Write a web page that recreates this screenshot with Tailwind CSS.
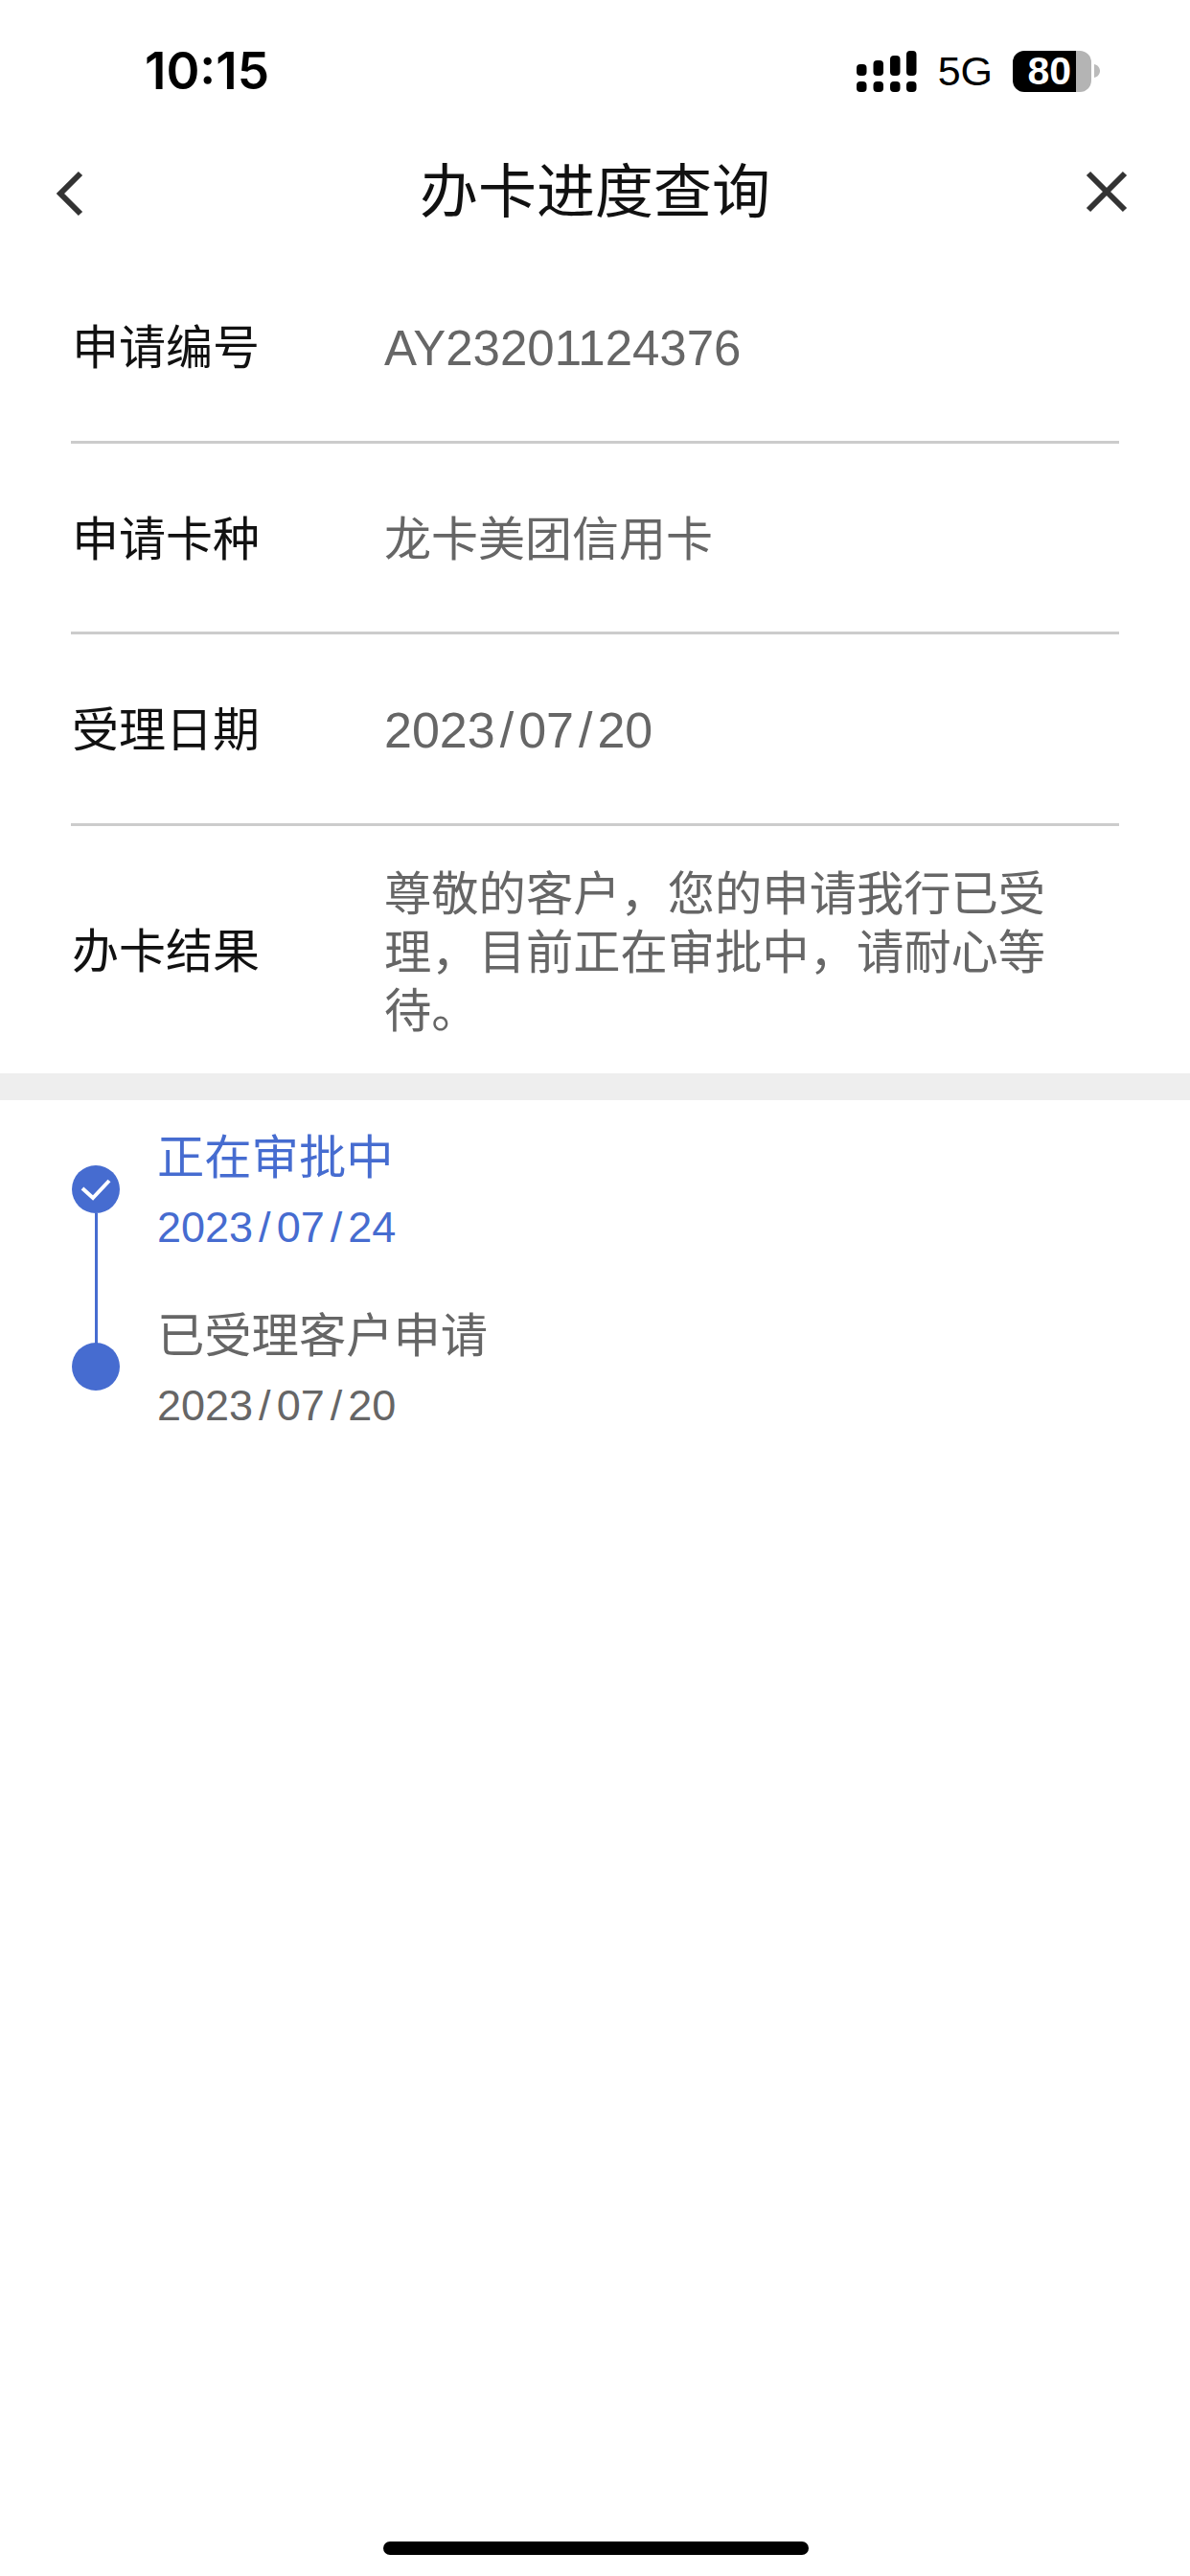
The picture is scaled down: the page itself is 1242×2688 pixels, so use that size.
<!DOCTYPE html>
<html lang="zh-CN">
<head>
    <meta charset="UTF-8"/>
    <meta name="viewport" content="width=device-width, initial-scale=1.0"/>
    <title>办卡进度查询</title>
    <script src="https://cdn.jsdelivr.net/npm/@tailwindcss/browser@4"></script>
</head>
<body class="bg-white font-['Liberation_Sans','Noto_Sans_CJK_SC',sans-serif]">
<div class="relative h-[2688px] w-[1242px] overflow-hidden bg-white">

    <!-- status bar -->
    <div class="flex h-[140px] items-center justify-between pl-[151px] pr-[94px] pt-[8px]">
        <span class="font-['Inter',sans-serif] text-[53px] font-semibold leading-none text-black">10:15</span>
        <div class="flex items-center">
            <svg width="63" height="43" viewBox="0 0 63 43" fill="#000">
                <rect x="0" y="14" width="10.500" height="12" rx="4"/>
                <rect x="17.500" y="10" width="10.500" height="16" rx="4"/>
                <rect x="35" y="5" width="10.500" height="21" rx="4"/>
                <rect x="52" y="0" width="10.500" height="26" rx="4"/>
                <rect x="0" y="32" width="10.500" height="11" rx="4"/>
                <rect x="17.500" y="32" width="10.500" height="11" rx="4"/>
                <rect x="35" y="32" width="10.500" height="11" rx="4"/>
                <rect x="52" y="32" width="10.500" height="11" rx="4"/>
            </svg>
            <span class="ml-[22px] text-[43px] leading-none text-black">5G</span>
            <div class="ml-[21px] flex h-[43px] w-[66px] items-center justify-end rounded-l-[12px] bg-black pr-[5px]">
                <span class="text-[41px] font-bold leading-none text-white">80</span>
            </div>
            <div class="h-[43px] w-[16px] rounded-r-[12px] bg-[#b4b4b4]"></div>
            <svg class="ml-[3px]" width="6" height="14" viewBox="0 0 6 14" fill="#bbb"><path d="M0 0C4 1 6 4 6 7S4 13 0 14Z"/></svg>
        </div>
    </div>

    <!-- nav -->
    <div class="relative flex h-[120px] items-center justify-center pt-[2px]">
        <svg class="absolute left-[58px] top-[38px]" width="30" height="48" viewBox="0 0 30 48" fill="none" stroke="#333" stroke-width="6">
            <path d="M26 3L5 24L26 45"/>
        </svg>
        <h1 class="text-[61px] font-normal leading-none text-[#111]">办卡进度查询</h1>
        <svg class="absolute left-[1133px] top-[38px]" width="44" height="44" viewBox="0 0 44 44" fill="none" stroke="#333" stroke-width="6">
            <path d="M3 3L41 41M41 3L3 41"/>
        </svg>
    </div>

    <!-- info rows -->
    <div class="px-[74px]">
        <div class="flex h-[203px] items-center border-b-[3px] border-[#cccccc] pt-[6px]">
            <span class="w-[327px] pl-[1px] text-[49px] leading-none text-[#111]">申请编号</span>
            <span class="text-[51px] leading-none text-[#666]">AY23201124376</span>
        </div>
        <div class="flex h-[199px] items-center border-b-[3px] border-[#cccccc] pt-[4px]">
            <span class="w-[327px] pl-[1px] text-[49px] leading-none text-[#111]">申请卡种</span>
            <span class="text-[49px] leading-none text-[#666]">龙卡美团信用卡</span>
        </div>
        <div class="flex h-[200px] items-center border-b-[3px] border-[#cccccc] pt-[3px]">
            <span class="w-[327px] pl-[1px] text-[49px] leading-none text-[#111]">受理日期</span>
            <span class="text-[52px] leading-none text-[#666]">2023<span class="mx-[5px]">/</span>07<span class="mx-[5px]">/</span>20</span>
        </div>
        <div class="flex h-[258px] items-center pt-[4px]">
            <span class="w-[327px] shrink-0 pl-[1px] text-[49px] leading-none text-[#111]">办卡结果</span>
            <p class="w-[700px] text-[49.300px] leading-[61px] text-[#666]">尊敬的客户，您的申请我行已受理，目前正在审批中，请耐心等待。</p>
        </div>
    </div>

    <div class="h-[28px] bg-[#eeeeee]"></div>

    <!-- timeline -->
    <div class="relative px-[75px] pt-[26px]">
        <div class="absolute left-[99px] top-[118px] h-[136px] w-[3px] bg-[#466cd0]"></div>

        <div class="flex h-[186px]">
            <div class="relative mt-[42px] flex h-[50px] w-[50px] items-center justify-center rounded-full bg-[#466cd0]">
                <svg width="32" height="24" viewBox="0 0 32 24" fill="none" stroke="#fff" stroke-width="4">
                    <path d="M2 11L13 21L30 3"/>
                </svg>
            </div>
            <div class="ml-[39px] text-[#466cd0]">
                <p class="text-[49.300px] leading-[68px]">正在审批中</p>
                <p class="mt-[15px] text-[45px] leading-[48px]">2023<span class="mx-[6px]">/</span>07<span class="mx-[6px]">/</span>24</p>
            </div>
        </div>

        <div class="flex">
            <div class="relative mt-[41px] h-[50px] w-[50px] rounded-full bg-[#466cd0]"></div>
            <div class="ml-[39px] text-[#666]">
                <p class="text-[49.300px] leading-[68px]">已受理客户申请</p>
                <p class="mt-[15px] text-[45px] leading-[48px]">2023<span class="mx-[6px]">/</span>07<span class="mx-[6px]">/</span>20</p>
            </div>
        </div>
    </div>

    <!-- home indicator -->
    <div class="absolute bottom-[22px] left-[400px] h-[14px] w-[444px] rounded-full bg-black"></div>
</div>
</body>
</html>
